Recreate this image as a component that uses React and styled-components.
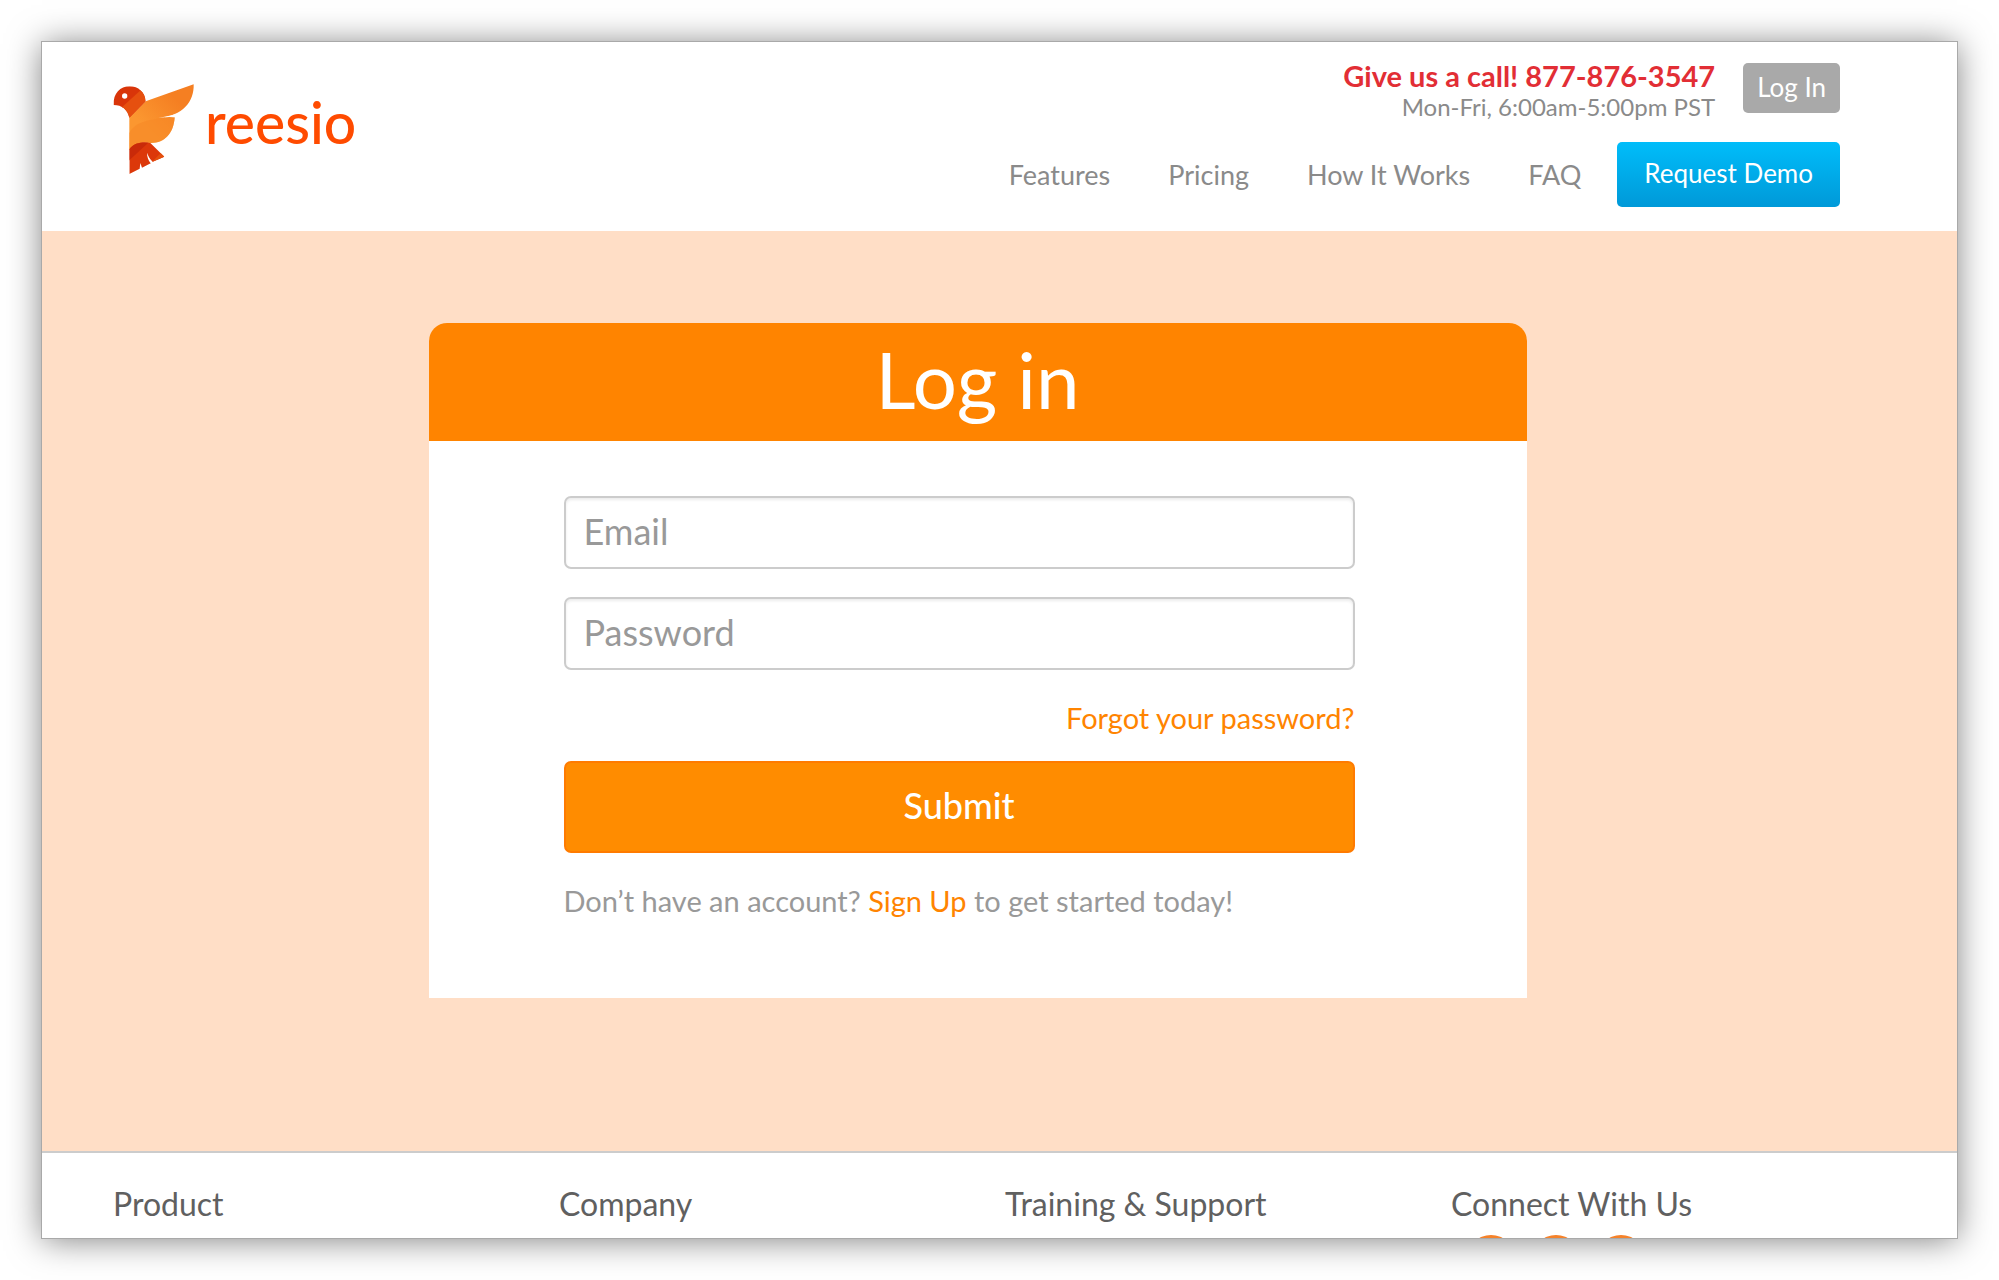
import styled, { createGlobalStyle } from "styled-components";

import { useState } from "react";

const GlobalStyle = createGlobalStyle`
    * {
        box-sizing: border-box;
    }
    body {
        margin: 0;
        background: #fff;
        color: #8a8a8a;
        font-family: Lato, "Open Sans", sans-serif;
        font-size: 27px;
        line-height: 40px;
    }
    h1, h2, p, ul {
        margin: 0;
        padding: 0;
        font-weight: 400;
    }
    a {
        color: inherit;
        text-decoration: none;
    }
`;

const Page = styled.div`
    height: 100vh;
    padding: 42px;
    overflow: hidden;
`;

const Window = styled.div`
    height: 100%;
    overflow: hidden;
    background: #fff;
    box-shadow: 0 0 0 1px #a9a9a9, 0 2px 32px rgba(0, 0, 0, 0.5);
`;

const Header = styled.header`
    display: flex;
    justify-content: space-between;
    padding: 21px 117px 24px 71px;
`;

const Logo = styled.a`
    display: flex;
    align-items: flex-start;
    gap: 10px;
    padding-top: 21px;
    color: #ff4b00;
    font-size: 57px;
    font-weight: 500;
    line-height: 76px;
`;

const Bird = styled.svg`
    width: 82px;
    height: 90px;
`;

const HeaderRight = styled.div`
    display: flex;
    flex-direction: column;
    align-items: flex-end;
    gap: 15px;
`;

const Contact = styled.div`
    display: flex;
    align-items: flex-start;
    gap: 28px;
    height: 64px;
    text-align: right;
`;

const Phone = styled.p`
    color: #e22e35;
    font-size: 29px;
    font-weight: 700;
    line-height: 26px;
`;

const Hours = styled.p`
    font-size: 24px;
    line-height: 36px;
`;

const LoginLink = styled.a`
    padding: 4px 14px 6px;
    border-radius: 5px;
    background: #a9a9a9;
    color: #fff;
    font-size: 26px;
`;

const Nav = styled.nav`
    display: flex;
    align-items: center;
    gap: 58px;
`;

const DemoLink = styled.a`
    margin-left: -22px;
    padding: 11px 27px 14px;
    border-radius: 5px;
    background: linear-gradient(#00bdfa, #0099d8);
    color: #fff;
    font-size: 26px;
`;

const Main = styled.main`
    display: flex;
    justify-content: center;
    padding: 92px 116px 153px 72px;
    background: #ffdec6;
`;

const Card = styled.section`
    flex: 0 1 1098px;
    overflow: hidden;
    border-radius: 18px 18px 0 0;
    background: #fff;
`;

const CardTitle = styled.h1`
    padding-bottom: 6px;
    background: #ff8400;
    color: #fff;
    font-size: 78px;
    line-height: 112px;
    text-align: center;
`;

const Form = styled.form`
    display: flex;
    flex-direction: column;
    gap: 28px;
    padding: 55px 172px 77px 135px;
`;

const Input = styled.input`
    width: 100%;
    height: 73px;
    padding: 0 18px 4px;
    border: 2px solid #ccc;
    border-radius: 7px;
    background: #fff;
    box-shadow: inset 0 2px 3px rgba(0, 0, 0, 0.08);
    color: #555;
    font: inherit;
    font-size: 36px;

    &::placeholder {
        color: #999;
        opacity: 1;
    }
`;

const FieldLink = styled.a`
    color: #ff8400;
`;

const Forgot = styled.p`
    margin-bottom: -5px;
    font-size: 29px;
    text-align: right;
`;

const Submit = styled.button`
    height: 92px;
    padding: 0 0 4px;
    border: 2px solid #ff7b00;
    border-radius: 7px;
    background: #ff8c00;
    color: #fff;
    font: inherit;
    font-size: 36px;
    font-weight: 500;
    cursor: pointer;
`;

const SignUp = styled.p`
    color: #999;
    font-size: 29px;
`;

const Footer = styled.footer`
    display: grid;
    grid-template-columns: repeat(4, 1fr);
    padding: 29px 60px 40px 71px;
    border-top: 2px solid #ccc;
`;

const FooterTitle = styled.h2`
    color: #606060;
    font-size: 32px;
    line-height: 44px;
`;

const Social = styled.div`
    display: flex;
    gap: 17px;
    padding: 9px 0 0 16px;
`;

const SocialLink = styled.a`
    width: 48px;
    height: 48px;
    border-radius: 50%;
    background: #f5822a;
`;

const navItems = ["Features", "Pricing", "How It Works", "FAQ"];
const footerItems = ["Product", "Company", "Training & Support"];
const networks = ["Facebook", "Twitter", "LinkedIn"];

function BirdLogo() {
    return (
        <Bird viewBox="40 42 246 270" aria-hidden="true">
            <defs>
                <linearGradient id="wing" x1="0" y1="1" x2="1" y2="0">
                    <stop offset="0.3" stopColor="#fb9730" />
                    <stop offset="0.75" stopColor="#f57f22" />
                </linearGradient>
                <clipPath id="head">
                    <path d="M42 105C40 70 62 49 90 49C116 49 136 67 138 94L89 143C84 119 67 105 42 105Z" />
                </clipPath>
                <clipPath id="tail">
                    <path d="M89 238C104 218 130 214 152 219L194 260L159 275C151 268 145 256 142 248C142 260 146 271 153 280L127 293L122 279L120 296L89 312Z" />
                </clipPath>
            </defs>
            <path
                fill="url(#wing)"
                d="M138 94L282 43C284 94 250 139 176 144Q200 140 225 142C222 190 195 220 152 219C125 214 105 221 89 240V142Z"
            />
            <path fill="#f68826" d="M89 190C103 158 145 146 225 142C222 190 195 220 152 219C125 214 105 221 89 240Z" opacity="0.6" />
            <path fill="#fff" d="M176 144Q204 139 230 132L225 142Q204 140 176 144Z" />
            <g clipPath="url(#head)">
                <rect x="40" y="45" width="100" height="100" fill="#d93509" />
                <path fill="#e6500f" d="M126 58L60 118V150H145V58Z" />
            </g>
            <circle cx="75" cy="78" r="8" fill="#fff" />
            <g clipPath="url(#tail)">
                <rect x="85" y="210" width="112" height="104" fill="#dc380a" />
                <path fill="#c92a09" d="M85 210H155L85 274Z" />
                <path fill="#e4500e" d="M186 246L120 314H200V246Z" />
            </g>
        </Bird>
    );
}

function App() {
    const [email, setEmail] = useState("");
    const [password, setPassword] = useState("");

    return (
        <>
            <GlobalStyle />
            <Page>
                <Window>
                    <Header>
                        <Logo href="#">
                            <BirdLogo />
                            reesio
                        </Logo>
                        <HeaderRight>
                            <Contact>
                                <div>
                                    <Phone>Give us a call! 877-876-3547</Phone>
                                    <Hours>Mon-Fri, 6:00am-5:00pm PST</Hours>
                                </div>
                                <LoginLink href="#">Log In</LoginLink>
                            </Contact>
                            <Nav>
                                {navItems.map((item) => (
                                    <a href="#" key={item}>
                                        {item}
                                    </a>
                                ))}
                                <DemoLink href="#">Request Demo</DemoLink>
                            </Nav>
                        </HeaderRight>
                    </Header>
                    <Main>
                        <Card>
                            <CardTitle>Log in</CardTitle>
                            <Form onSubmit={(e) => e.preventDefault()}>
                                <Input
                                    type="email"
                                    aria-label="Email"
                                    placeholder="Email"
                                    value={email}
                                    onChange={(e) => setEmail(e.target.value)}
                                />
                                <Input
                                    type="password"
                                    aria-label="Password"
                                    placeholder="Password"
                                    value={password}
                                    onChange={(e) => setPassword(e.target.value)}
                                />
                                <Forgot>
                                    <FieldLink href="#">Forgot your password?</FieldLink>
                                </Forgot>
                                <Submit type="submit">Submit</Submit>
                                <SignUp>
                                    Don’t have an account? <FieldLink href="#">Sign Up</FieldLink> to get
                                    started today!
                                </SignUp>
                            </Form>
                        </Card>
                    </Main>
                    <Footer>
                        {footerItems.map((item) => (
                            <FooterTitle key={item}>{item}</FooterTitle>
                        ))}
                        <div>
                            <FooterTitle>Connect With Us</FooterTitle>
                            <Social>
                                {networks.map((name) => (
                                    <SocialLink href="#" key={name} aria-label={name} />
                                ))}
                            </Social>
                        </div>
                    </Footer>
                </Window>
            </Page>
        </>
    );
}

export default App;
